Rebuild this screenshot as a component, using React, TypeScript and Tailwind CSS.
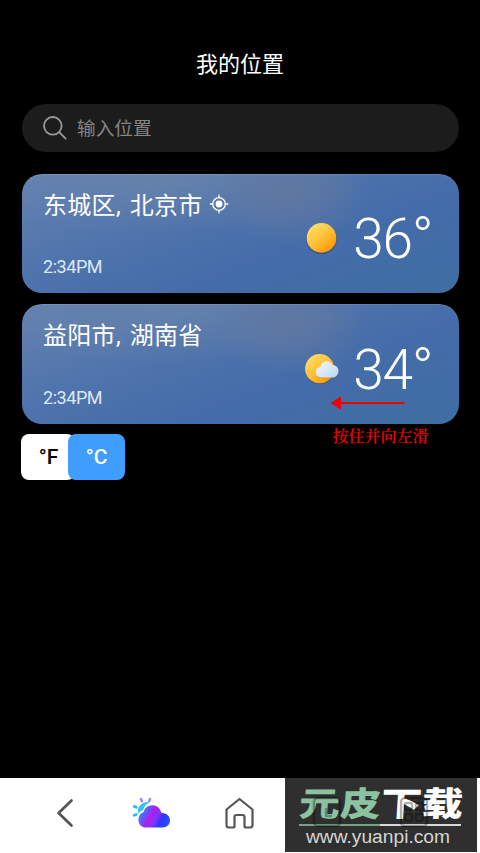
type Place = {
  name: string;
  time: string;
  temp: string;
  current?: boolean;
  cloudy?: boolean;
};

const places: Place[] = [
  { name: "东城区, 北京市", time: "2:34PM", temp: "36", current: true },
  { name: "益阳市, 湖南省", time: "2:34PM", temp: "34", cloudy: true },
];

function SearchIcon() {
  return (
    <svg className="size-6 shrink-0" viewBox="0 0 24 24" fill="none" stroke="#9a9a9a" strokeWidth="1.8" strokeLinecap="round">
      <circle cx="9.8" cy="9.8" r="8.8" />
      <path d="M16.2 16.2l6.4 6.4" />
    </svg>
  );
}

function LocateIcon() {
  return (
    <svg className="-mt-1 size-5 shrink-0" viewBox="0 0 20 20" fill="none" stroke="white" strokeWidth="1.3" strokeLinecap="round">
      <circle cx="10" cy="10" r="6.3" />
      <circle cx="10" cy="10" r="3.4" fill="white" stroke="none" />
      <path d="M10 1.2v2.5M10 16.3v2.5M1.2 10h2.5M16.3 10h2.5" />
    </svg>
  );
}

function WeatherIcon({ cloudy }: { cloudy?: boolean }) {
  return (
    <svg className="h-10 w-10 shrink-0" viewBox="0 0 40 40">
      <defs>
        <linearGradient id="sun" x1="0.15" y1="0.1" x2="0.85" y2="0.9">
          <stop offset="0" stopColor="#ffdd65" />
          <stop offset="0.5" stopColor="#ffc038" />
          <stop offset="1" stopColor="#ff9800" />
        </linearGradient>
        <linearGradient id="cloud" x1="0" y1="0" x2="1" y2="1">
          <stop offset="0" stopColor="#f2f8ff" />
          <stop offset="0.5" stopColor="#dce9fa" />
          <stop offset="1" stopColor="#b4d4f5" />
        </linearGradient>
      </defs>
      {cloudy ? (
        <>
          <circle cx="18.7" cy="20.4" r="14.7" fill="#1e3a66" opacity="0.35" />
          <circle cx="18.7" cy="19.7" r="14.6" fill="url(#sun)" />
          <path d="M21 30a5.400 5.400 0 0 1-.7-10.600c.8-3.800 3.200-6 6.500-6 2.700 0 4.900 1.600 5.900 4 3.600-.3 6 2.500 6 5.900 0 3.700-2.400 6.700-6 6.700z" transform="translate(-1 -.5)" fill="#b36b00" opacity="0.3" />
          <path d="M20.800 28.900a5.200 5.200 0 0 1-.6-10.300c.8-3.700 3.200-5.800 6.400-5.800 2.700 0 4.900 1.500 5.900 3.900 3.500-.3 6 2.400 6 5.800 0 3.600-2.400 6.400-6 6.400z" transform="translate(-1 -.5)" fill="url(#cloud)" />
        </>
      ) : (
        <>
          <circle cx="20.500" cy="20.900" r="15.200" fill="#1e3a66" opacity="0.4" />
          <circle cx="20.500" cy="19.900" r="14.800" fill="url(#sun)" />
        </>
      )}
    </svg>
  );
}

function PlaceCard({ place }: { place: Place }) {
  return (
    <div className="relative flex h-[119.5px] justify-between overflow-hidden rounded-[20px] bg-[radial-gradient(ellipse_75px_48px_at_268px_22px,rgba(100,120,158,0.75),rgba(100,120,158,0.4)_55%,rgba(100,120,158,0)),radial-gradient(ellipse_210px_60px_at_140px_0px,rgba(104,132,170,0.8),rgba(104,132,170,0)),linear-gradient(160deg,#6582b2_0%,#5074ac_35%,#446ca9_65%,#3e6ea2_100%)] pt-[16px] pr-[26px] pb-[14px] pl-[21.500px] shadow-[inset_0_1px_0_rgba(255,255,255,0.12)]">
      <div className="flex flex-col justify-between">
        <div className="flex h-8 items-center gap-1.5 text-[24px] tracking-[0.3px] text-white [word-spacing:2.500px]">
          <span className="whitespace-nowrap">{place.name}</span>
          {place.current && <LocateIcon />}
        </div>
        <div className="text-[18px] leading-6 tracking-[-0.45px] text-[#dce8f8]">{place.time}</div>
      </div>
      <div className="flex items-center gap-[12px] pt-[8px]">
        <WeatherIcon cloudy={place.cloudy} />
        <span className="text-[55px] leading-none font-light tracking-[-1.2px] text-white">
          {place.temp}
          <span className="text-[58px] leading-none">°</span>
        </span>
      </div>
    </div>
  );
}

function SwipeHint() {
  return (
    <div className="absolute top-[221px] left-[308px] text-[#f00000]">
      <svg className="block h-4 w-[76px]" viewBox="0 0 76 16">
        <path d="M11 8h63.500" stroke="currentColor" strokeWidth="2" />
        <path d="M0.500 8l10.500-6.500v13z" fill="currentColor" />
      </svg>
      <div className="mt-[13.500px] ml-[3px] font-['Noto_Serif_CJK_SC','Noto_Sans_CJK_SC',serif] text-[16px] leading-6 font-semibold whitespace-nowrap">按住并向左滑</div>
    </div>
  );
}

function CloudLogo() {
  return (
    <svg className="h-8 w-10" viewBox="0 0 40 32">
      <defs>
        <linearGradient id="logo" x1="0" y1="0.300" x2="1" y2="0.700">
          <stop offset="0" stopColor="#2898ff" />
          <stop offset="0.220" stopColor="#6158f8" />
          <stop offset="0.400" stopColor="#b01eee" />
          <stop offset="0.580" stopColor="#8434f6" />
          <stop offset="0.750" stopColor="#2c36ff" />
          <stop offset="1" stopColor="#2850ff" />
        </linearGradient>
      </defs>
      <path d="M6 17a9.500 9.500 0 0 1 12-11.500c-4 1.500-6 4-6.700 7.500-2.500.8-4.300 2-5.300 4z" fill="#35c3f8" />
      <path d="M2.200 9.500l2 .8M2.200 18.300l2-.8" stroke="#25b8f4" strokeWidth="2.800" strokeLinecap="round" />
      <path d="M9 2l.9 2.200M18 2l-.9 2.200" stroke="#a78cf0" strokeWidth="2.600" strokeLinecap="round" />
      <path d="M12 30.500a8.300 8.300 0 0 1-.3-15.600C12.500 11 16 8.200 20.500 8.200c4.500 0 7.800 3 8.800 7.600 5 .2 8.700 3.200 8.700 7.500 0 4.200-3.200 7.200-7.500 7.200z" fill="url(#logo)" />
    </svg>
  );
}

function Watermark() {
  return (
    <div className="absolute top-0 right-[3px] flex h-[74px] w-48 flex-col items-center overflow-hidden bg-[#2f2f2f]">
      <div className="mt-[7px] h-[39px] scale-y-[0.82] -skew-x-3 text-[41px] leading-[40px] font-black whitespace-nowrap">
        <span className="text-[#8bc3a0]">元皮</span>
        <span className="text-white">下载</span>
      </div>
      <div className="-ml-0.5 flex h-[1.5px] w-[162px] shrink-0">
        <div className="w-1/2 bg-[#73a285]" />
        <div className="w-1/2 bg-[#d8d8d8]" />
      </div>
      <div className="-ml-1.5 font-['Liberation_Sans',sans-serif] text-[19.200px] leading-[21px] text-[#d5d5d5]">www.yuanpi.com</div>
      {/* dimmed tab icons showing through the banner */}
      <svg className="absolute top-[18px] left-[27px] h-8 w-[118px] opacity-30" viewBox="0 0 118 32" fill="none" stroke="black" strokeWidth="2.400">
        <rect x="2" y="2" width="26" height="28" rx="4" />
        <path d="M14 12v8h6" />
        <rect x="89" y="2" width="26" height="28" rx="4" />
        <rect x="93" y="7" width="7" height="7" rx="2" />
        <rect x="104" y="7" width="7" height="7" rx="2" />
        <rect x="93" y="18" width="7" height="7" rx="2" />
        <rect x="104" y="18" width="7" height="7" rx="2" />
      </svg>
    </div>
  );
}

export default function App() {
  return (
    <div className="flex h-[853px] w-[480px] flex-col overflow-hidden bg-black font-[Roboto,'Noto_Sans_CJK_SC',sans-serif]">
      <h1 className="mt-[49px] h-[31px] text-center text-[22px] leading-8 text-white">我的位置</h1>
      <div className="mx-[21.500px] mt-6 flex h-12 shrink-0 items-center gap-[10px] rounded-full bg-[#1c1c1c] pl-[21.500px] text-[18.700px] text-[#858585]">
        <SearchIcon />
        <span className="mt-0.5">输入位置</span>
      </div>

      <div className="relative mx-[21.500px] mt-[21.500px] flex flex-col gap-[11px]">
        {places.map((place) => (
          <PlaceCard key={place.name} place={place} />
        ))}
        <SwipeHint />
      </div>

      <div className="mx-[21px] mt-[10.500px] flex h-[45.500px] text-[21px] font-medium">
        <button className="w-[54px] rounded-lg bg-white pt-0.5 pl-px text-black">°F</button>
        <button className="-ml-[7px] w-[57px] rounded-lg bg-[#409eff] pt-0.5 text-white">°C</button>
      </div>

      <nav className="relative mt-auto flex h-[75px] shrink-0 items-center bg-white pl-[56px]">
        <svg className="-mt-1.5 h-8 w-[18px]" viewBox="0 0 18 32" fill="none" stroke="#555" strokeWidth="2.700" strokeLinecap="round" strokeLinejoin="round">
          <path d="M15.500 3.500L2.600 16l12.900 12.500" />
        </svg>
        <div className="-mt-1.5 ml-[58px]">
          <CloudLogo />
        </div>
        <svg className="-mt-1.5 ml-[53px] h-8 w-[29px]" viewBox="0 0 29 32" fill="none" stroke="#555" strokeWidth="2.200" strokeLinejoin="round">
          <path d="M1.500 12.500L14.500 2l13 10.500v15.500q0 2.500-2.500 2.500h-4q-1.500 0-1.500-1.500v-9q0-2-2-2h-6q-2 0-2 2v9q0 1.500-1.500 1.500h-4q-2.500 0-2.500-2.500z" />
        </svg>
        <Watermark />
      </nav>
    </div>
  );
}
